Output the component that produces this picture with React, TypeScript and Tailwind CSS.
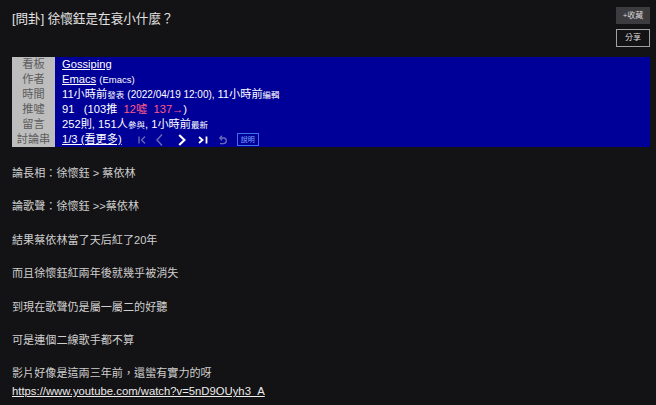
import React from 'react';

const font = '[font-family:"Liberation_Sans","Noto_Sans_CJK_TC",sans-serif]';

type MetaRow = {
  label: string;
  value: React.ReactNode;
};

const Small = ({ children }: { children: React.ReactNode }) => (
  <span className="text-[8.5px]">{children}</span>
);

const NavIcons = () => (
  <div className="flex items-center ml-[16px]">
    {/* first page */}
    <svg width="8" height="12" viewBox="0 0 8 12" className="mr-[10px]">
      <path d="M1 2.5v7M7 2.5L3.5 6 7 9.5" stroke="#6b6bb8" strokeWidth="1.3" fill="none" />
    </svg>
    {/* prev */}
    <svg width="7" height="14" viewBox="0 0 7 14" className="mr-[15px]">
      <path d="M6 1.5L1 7l5 5.5" stroke="#6b6bb8" strokeWidth="1.4" fill="none" />
    </svg>
    {/* next */}
    <svg width="8" height="14" viewBox="0 0 8 14" className="mr-[12px]">
      <path d="M1.2 2L6.5 7l-5.3 5" stroke="#ffffff" strokeWidth="2.2" fill="none" />
    </svg>
    {/* last */}
    <svg width="10" height="12" viewBox="0 0 10 12" className="mr-[10px]">
      <path d="M1 3L4.5 6 1 9" stroke="#ffffff" strokeWidth="1.8" fill="none" />
      <path d="M8.5 2.5v7" stroke="#ffffff" strokeWidth="1.8" />
    </svg>
    {/* undo */}
    <svg width="9" height="12" viewBox="0 0 9 12" className="mr-[10px]">
      <path d="M2.5 4h3a2.8 2.8 0 0 1 0 5.6H2" stroke="#6b6bb8" strokeWidth="1.3" fill="none" />
      <path d="M4 1.8L1.8 4 4 6.2" stroke="#6b6bb8" strokeWidth="1.3" fill="none" />
    </svg>
    <span className="border border-[#3f6fe8] text-[#7fa3ff] text-[7px] leading-[10px] px-[3px] py-[0.5px]">說明</span>
  </div>
);

const rows: MetaRow[] = [
  { label: '看板', value: <span className="underline">Gossiping</span> },
  {
    label: '作者',
    value: (
      <>
        <span className="underline">Emacs</span> <span className="text-[9.5px]">(Emacs)</span>
      </>
    )
  },
  {
    label: '時間',
    value: (
      <>
        11小時前<Small>發表</Small> <span className="text-[10px]">(2022/04/19 12:00), </span>11小時前<Small>編輯</Small>
      </>
    )
  },
  {
    label: '推噓',
    value: (
      <>
        91<span className="whitespace-pre">{'   '}</span>(103推 <span className="text-[#ff5a86]">&nbsp;12噓</span>{' '}
        <span className="text-[#ff5a86]">&nbsp;137→</span>)
      </>
    )
  },
  {
    label: '留言',
    value: (
      <>
        252則, 151人<Small>參與</Small>, 1小時前<Small>最新</Small>
      </>
    )
  },
  {
    label: '討論串',
    value: (
      <div className="flex items-center">
        <span className="underline">1/3 (看更多)</span>
        <NavIcons />
      </div>
    )
  }
];

const paragraphs = [
  '論長相：徐懷鈺 > 蔡依林',
  '論歌聲：徐懷鈺 >>蔡依林',
  '結果蔡依林當了天后紅了20年',
  '而且徐懷鈺紅兩年後就幾乎被消失',
  '到現在歌聲仍是屬一屬二的好聽',
  '可是連個二線歌手都不算'
];

export default function App() {
  return (
    <div className={`w-[656px] h-[405px] overflow-hidden bg-[#131214] pl-3 pr-[6px] ${font}`}>
      <div className="flex justify-between pt-[7px]">
        <h1 className="text-[12.6px] leading-[16px] mt-[4px] text-[#e2e2e2] font-normal">[問卦] 徐懷鈺是在衰小什麼？</h1>
        <div className="flex flex-col gap-[5px] w-[34px]">
          <button type="button" className="h-[17px] bg-[#3c3c3e] text-[#d6d6d6] text-[8px] leading-[17px] text-center">
            +收藏
          </button>
          <button
            type="button"
            className="h-[18px] border border-[#a0a0a0] text-[#dcdcdc] text-[8px] leading-[16px] text-center"
          >
            分享
          </button>
        </div>
      </div>

      <div className="mt-[10px] grid grid-cols-[43px_1fr] bg-[#000098] text-[11.2px] text-white">
        {rows.map((row) => (
          <React.Fragment key={row.label}>
            <div className="bg-[#bdbdbd] text-[#5c5c5c] h-[15px] leading-[15px] text-center">{row.label}</div>
            <div className="h-[15px] leading-[15px] pl-[7px] whitespace-nowrap">{row.value}</div>
          </React.Fragment>
        ))}
      </div>

      <div className="mt-[18px] text-[11.1px] leading-[16.7px] text-[#cfcfcf]">
        {paragraphs.map((p) => (
          <div key={p} className="mb-[16.7px]">
            {p}
          </div>
        ))}
        <div>影片好像是這兩三年前，還蠻有實力的呀</div>
        <a className="block text-[11.3px] leading-[18px] text-[#ececec] underline">
          https://www.youtube.com/watch?v=5nD9OUyh3_A
        </a>
      </div>
    </div>
  );
}
